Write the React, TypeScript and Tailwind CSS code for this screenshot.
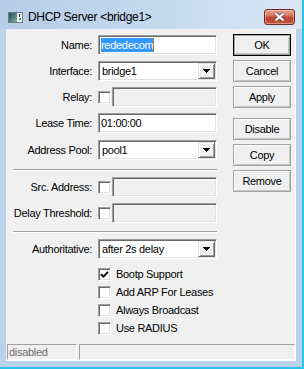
import React from "react";

const sunken =
  "border border-t-[#a0a0a0] border-l-[#a0a0a0] border-r-white border-b-white shadow-[inset_1px_1px_0_#696969,inset_-1px_-1px_0_#e3e3e3]";
const raised =
  "border border-t-[#e3e3e3] border-l-[#e3e3e3] border-r-[#696969] border-b-[#696969] shadow-[inset_1px_1px_0_#fff,inset_-1px_-1px_0_#a0a0a0]";
const btnStyle =
  "border border-[#a3a3a3] shadow-[inset_1px_1px_0_#fdfdfd,inset_-1px_-1px_0_#c4c4c4]";

function Arrow() {
  return (
    <svg width="7" height="4" viewBox="0 0 7 4" shapeRendering="crispEdges">
      <path d="M0 0h7v1h-1v1h-1v1h-1v1h-1v-1h-1v-1h-1v-1h-1z" fill="#000" />
    </svg>
  );
}

function Combo({ value }: { value: string }) {
  return (
    <div className={`w-[119px] h-[20px] bg-white ${sunken} flex items-stretch p-[1px]`}>
      <div className="flex-1 flex items-center pl-[2px]">{value}</div>
      <div className={`w-[17px] bg-[#f0f0f0] ${raised} flex items-center justify-center`}>
        <Arrow />
      </div>
    </div>
  );
}

function Check({ checked = false }: { checked?: boolean }) {
  return (
    <div className={`w-[13px] h-[13px] shrink-0 bg-white ${sunken} flex items-center justify-center`}>
      {checked && (
        <svg width="9" height="9" viewBox="0 0 9 9">
          <path d="M1 4.2L3.4 6.6L8 1.8" stroke="#000" strokeWidth="1.9" fill="none" />
        </svg>
      )}
    </div>
  );
}

function Row({ label, children, className = "" }: { label: string; children: React.ReactNode; className?: string }) {
  return (
    <div className={`flex items-center h-[20px] ${className}`}>
      <div className="w-[86px] shrink-0 text-right whitespace-nowrap">{label}</div>
      <div className="ml-[6px] flex items-center">{children}</div>
    </div>
  );
}

function OptField() {
  return (
    <div className="flex items-center">
      <Check />
      <div className={`ml-[1px] w-[105px] h-[20px] bg-[#f0f0f0] ${sunken}`} />
    </div>
  );
}

function Sep({ className = "" }: { className?: string }) {
  return <div className={`ml-[7px] w-[204px] h-[2px] border-t border-[#a0a0a0] bg-white ${className}`} />;
}

function Btn({ label, def = false, className = "" }: { label: string; def?: boolean; className?: string }) {
  if (def) {
    return (
      <div className={`w-[58px] h-[22px] border border-black ${className}`}>
        <div className={`w-full h-full bg-[#f0f0f0] border border-[#a3a3a3] shadow-[inset_1px_1px_0_#fdfdfd,inset_-1px_-1px_0_#c4c4c4] flex items-center justify-center`}>
          {label}
        </div>
      </div>
    );
  }
  return (
    <div className={`w-[58px] h-[22px] bg-[#f0f0f0] ${btnStyle} flex items-center justify-center ${className}`}>
      {label}
    </div>
  );
}

function CheckRow({ label, checked = false }: { label: string; checked?: boolean }) {
  return (
    <div className="flex items-center h-[18px] pl-[92px]">
      <Check checked={checked} />
      <span className="ml-[5px] whitespace-nowrap">{label}</span>
    </div>
  );
}

function TitleIcon() {
  return (
    <svg width="15" height="11" viewBox="0 0 15 11">
      <defs>
        <linearGradient id="ti" x1="0" y1="0" x2="1" y2="1">
          <stop offset="0" stopColor="#1d4a4c" />
          <stop offset="1" stopColor="#7fb0a8" />
        </linearGradient>
      </defs>
      <rect x="0.5" y="0.5" width="14" height="10" fill="#f2f5f7" stroke="#6d7b88" />
      <rect x="1" y="1" width="8" height="9" fill="url(#ti)" />
      <rect x="11" y="2" width="1" height="3" fill="#222" />
      <rect x="11" y="6" width="2" height="2" fill="#3c9c48" />
    </svg>
  );
}

function CloseBtn() {
  return (
    <div className="w-[31px] h-[16px] rounded-[3px] border border-[#6e2b24] bg-[linear-gradient(180deg,#e6a595_0%,#d4765f_42%,#b9412c_55%,#c5573e_100%)] shadow-[inset_0_0_0_1px_rgba(255,220,210,0.45)] flex items-center justify-center">
      <svg width="13" height="10" viewBox="0 0 13 10">
        <path d="M2.5 1.5L10.5 8.5M10.5 1.5L2.5 8.5" stroke="#6a4a46" strokeWidth="3.8" />
        <path d="M2.5 1.5L10.5 8.5M10.5 1.5L2.5 8.5" stroke="#ffffff" strokeWidth="2.2" />
      </svg>
    </div>
  );
}

export default function App() {
  return (
    <div className="w-[304px] h-[369px] bg-[#b9d1ea] border-r-2 border-b-2 border-[#2cc3e6] flex flex-col font-['Liberation_Sans',Arial,sans-serif] text-[11px] tracking-[-0.3px] text-black leading-none overflow-hidden">
      <div className="h-[29px] shrink-0 bg-[linear-gradient(90deg,#b6cde8_0%,#c2d7ed_45%,#d9e7f5_100%)] pt-[8px] pl-[8px] pr-[7px]">
        <div className="flex items-center h-[18px]">
          <TitleIcon />
          <span className="ml-[5px] text-[12px] tracking-[-0.3px]">DHCP Server &lt;bridge1&gt;</span>
          <div className="ml-auto">
            <CloseBtn />
          </div>
        </div>
      </div>
      <div className="mx-[6px] mb-[6px] flex-1 bg-[#f0f0f0] border-r border-b border-white flex flex-col">
        <div className="flex flex-1">
          <div className="w-[211px] pt-[6px] flex flex-col">
            <Row label="Name:">
              <div className={`w-[119px] h-[20px] bg-white ${sunken} flex items-center pl-[2px]`}>
                <span className="h-[14px] bg-[#3399ff] text-white flex items-center">rededecom</span>
                <span className="w-[1px] h-[14px] bg-[#d06a1a]" />
              </div>
            </Row>
            <Row label="Interface:" className="mt-[6px]">
              <Combo value="bridge1" />
            </Row>
            <Row label="Relay:" className="mt-[6px]">
              <OptField />
            </Row>
            <Row label="Lease Time:" className="mt-[6px]">
              <div className={`w-[119px] h-[20px] bg-white ${sunken} flex items-center pl-[2px]`}>01:00:00</div>
            </Row>
            <Row label="Address Pool:" className="mt-[7px]">
              <Combo value="pool1" />
            </Row>
            <Sep className="mt-[9px]" />
            <Row label="Src. Address:" className="mt-[6px]">
              <OptField />
            </Row>
            <Row label="Delay Threshold:" className="mt-[6px]">
              <OptField />
            </Row>
            <Sep className="mt-[8px]" />
            <Row label="Authoritative:" className="mt-[6px]">
              <Combo value="after 2s delay" />
            </Row>
            <div className="mt-[6px] flex flex-col">
              <CheckRow label="Bootp Support" checked />
              <CheckRow label="Add ARP For Leases" />
              <CheckRow label="Always Broadcast" />
              <CheckRow label="Use RADIUS" />
            </div>
          </div>
          <div className="ml-[16px] pt-[5px] flex flex-col">
            <Btn label="OK" def />
            <Btn label="Cancel" className="mt-[4px]" />
            <Btn label="Apply" className="mt-[4px]" />
            <Btn label="Disable" className="mt-[10px]" />
            <Btn label="Copy" className="mt-[4px]" />
            <Btn label="Remove" className="mt-[4px]" />
          </div>
        </div>
        <div className="flex h-[16px] pl-[1px] gap-[2px] shrink-0">
          <div className="w-[70px] h-full border border-t-[#a0a0a0] border-l-[#a0a0a0] border-r-white border-b-white flex items-center pl-[1px] text-[#6d6d6d]">
            disabled
          </div>
          <div className="flex-1 h-full border border-t-[#a0a0a0] border-l-[#a0a0a0] border-r-white border-b-white" />
        </div>
      </div>
    </div>
  );
}
